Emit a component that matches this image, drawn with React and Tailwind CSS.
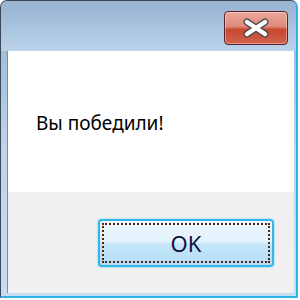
export default function App() {
  return (
    <div className="w-[300px] h-[300px] bg-white overflow-hidden">
      <div className="w-[298px] h-[298px] flex flex-col rounded-t-[7px] border-l border-t border-[#3b4656] border-r-2 border-r-[#2fb4e6] border-b-2 border-b-[#2fb4e6] bg-gradient-to-b from-[#98b2d0] via-[#bcd4ec] to-[#c8ddf2]">
        <div className="h-[50px] flex justify-end items-start pt-[10px] pr-[8px] bg-gradient-to-b from-[#98b2d0] to-[#bad2ea] rounded-t-[6px]">
          <CloseButton />
        </div>
        <div className="flex-1 flex flex-col pl-[6px] pr-[2px] pb-[3px]">
          <div className="h-[141px] bg-white flex items-center pl-[28px] pt-[4px] border-l border-[#7d8ea3]">
            <span className="text-[19px] text-black" style={{ fontFamily: '"Noto Sans", "Open Sans", sans-serif' }}>
              Вы победили!
            </span>
          </div>
          <div className="flex-1 bg-[#f0f0f0] flex justify-end items-start pt-[27px] pr-[20px] border-l border-[#7d8ea3]">
            <button className="w-[176px] h-[48px] rounded-[4px] border-2 border-[#33b6ea] p-[2px] bg-[linear-gradient(#eef7fd_0%,#e2f2fc_48%,#c4e6f9_52%,#b4def6_100%)] shadow-[0_0_2px_#5ccaf0]">
              <div className="w-full h-full border-2 border-dotted border-[#5a1f14] flex items-center justify-center">
                <span className="text-[22px] text-[#141440] leading-none" style={{ fontFamily: '"Noto Sans", "Open Sans", sans-serif' }}>
                  OK
                </span>
              </div>
            </button>
          </div>
        </div>
      </div>
    </div>
  )
}

function CloseButton() {
  return (
    <div className="w-[64px] h-[34px] rounded-[4px] border border-[#5b2230] bg-[linear-gradient(#eba89b_0%,#de8a7a_45%,#c8462f_55%,#d2644e_100%)] flex items-center justify-center shadow-[inset_0_0_0_1px_rgba(255,255,255,0.35)]">
      <svg width="28" height="22" viewBox="0 0 28 22">
        <path d="M5 5 L23 17 M23 5 L5 17" stroke="#4a4a52" strokeWidth="7" strokeLinecap="round" />
        <path d="M5 5 L23 17 M23 5 L5 17" stroke="#ffffff" strokeWidth="4.5" strokeLinecap="round" />
      </svg>
    </div>
  )
}
